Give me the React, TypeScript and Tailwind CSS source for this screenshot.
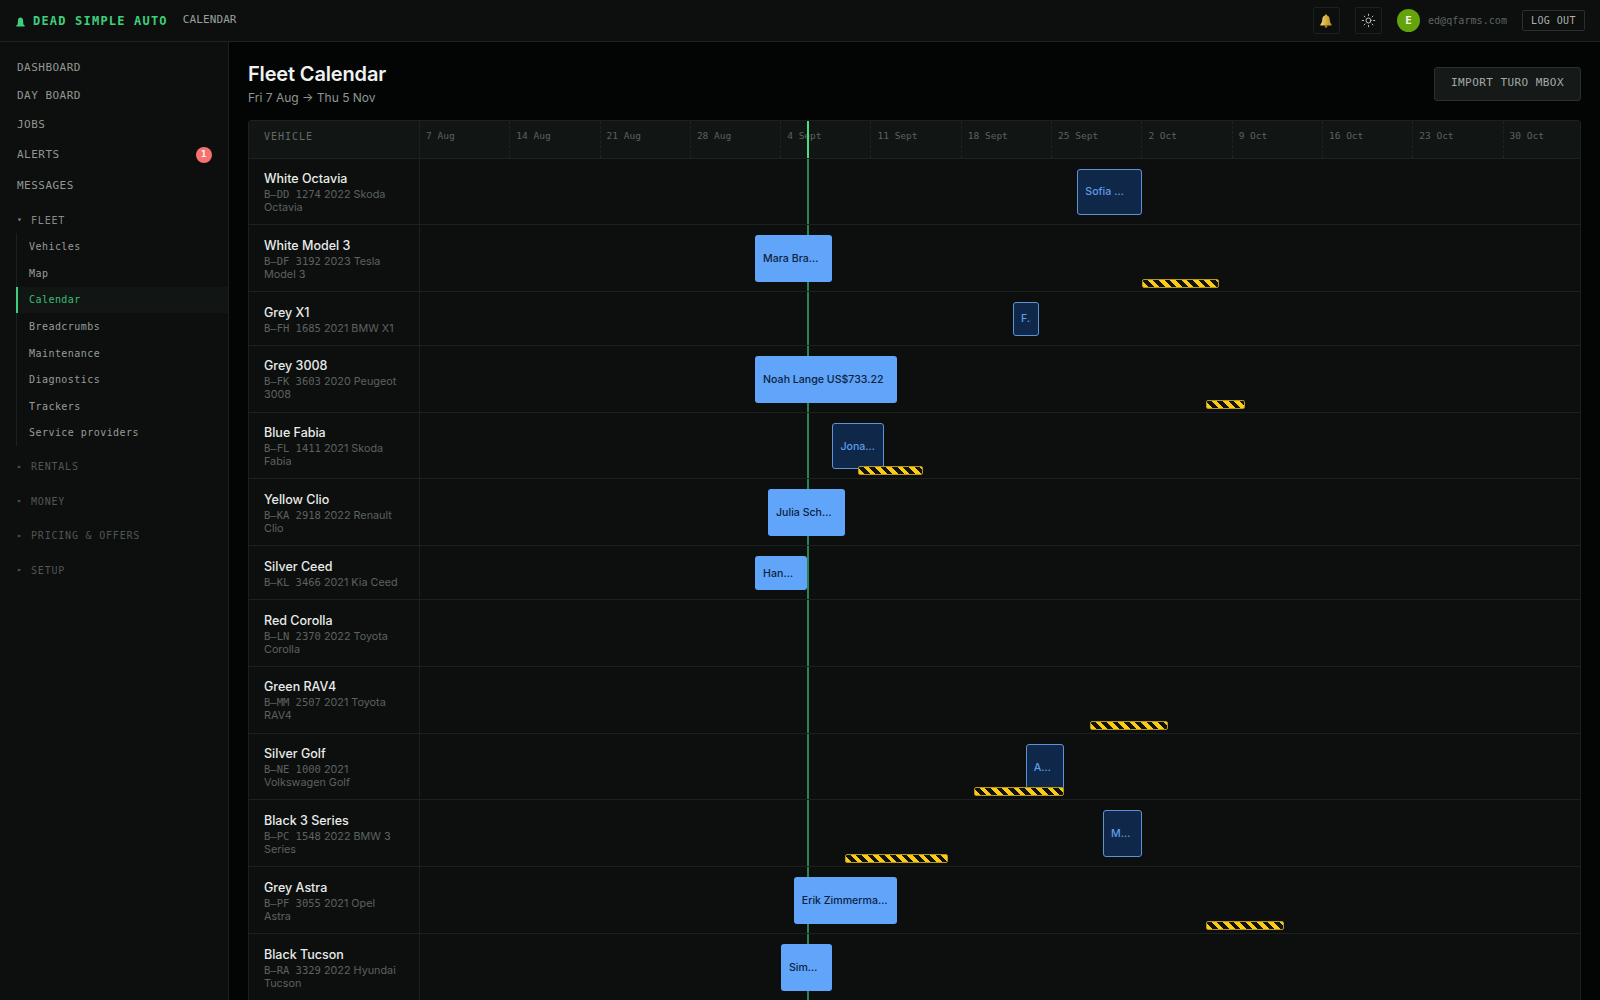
import { Sun } from 'lucide-react';

const mono = "font-['DejaVu_Sans_Mono',monospace]";
const TOTAL_DAYS = 90;
const TODAY = 30;

interface Booking {
    label: string;
    start: number;
    days: number;
    pending?: boolean;
}

interface Hold {
    start: number;
    days: number;
}

interface Vehicle {
    name: string;
    plate: string;
    desc: string;
    bookings?: Booking[];
    holds?: Hold[];
}

const vehicles: Vehicle[] = [
    { name: 'White Octavia', plate: 'B–DD 1274', desc: '2022 Skoda Octavia', bookings: [{ label: 'Sofia Wagner US$402.10', start: 51, days: 5, pending: true }] },
    { name: 'White Model 3', plate: 'B–DF 3192', desc: '2023 Tesla Model 3', bookings: [{ label: 'Mara Braun US$518.40', start: 26, days: 6 }], holds: [{ start: 56, days: 6 }] },
    { name: 'Grey X1', plate: 'B–FH 1685', desc: '2021 BMW X1', bookings: [{ label: 'Felix Wolf US$140.00', start: 46, days: 2, pending: true }] },
    { name: 'Grey 3008', plate: 'B–FK 3603', desc: '2020 Peugeot 3008', bookings: [{ label: 'Noah Lange US$733.22', start: 26, days: 11 }], holds: [{ start: 61, days: 3 }] },
    { name: 'Blue Fabia', plate: 'B–FL 1411', desc: '2021 Skoda Fabia', bookings: [{ label: 'Jonas Meyer US$266.00', start: 32, days: 4, pending: true }], holds: [{ start: 34, days: 5 }] },
    { name: 'Yellow Clio', plate: 'B–KA 2918', desc: '2022 Renault Clio', bookings: [{ label: 'Julia Schmidt US$310.75', start: 27, days: 6 }] },
    { name: 'Silver Ceed', plate: 'B–KL 3466', desc: '2021 Kia Ceed', bookings: [{ label: 'Hannah Vogel US$208.00', start: 26, days: 4 }] },
    { name: 'Red Corolla', plate: 'B–LN 2370', desc: '2022 Toyota Corolla' },
    { name: 'Green RAV4', plate: 'B–MM 2507', desc: '2021 Toyota RAV4', holds: [{ start: 52, days: 6 }] },
    { name: 'Silver Golf', plate: 'B–NE 1000', desc: '2021 Volkswagen Golf', bookings: [{ label: 'Anna Fischer US$190.00', start: 47, days: 3, pending: true }], holds: [{ start: 43, days: 7 }] },
    { name: 'Black 3 Series', plate: 'B–PC 1548', desc: '2022 BMW 3 Series', bookings: [{ label: 'Max Becker US$224.50', start: 53, days: 3, pending: true }], holds: [{ start: 33, days: 8 }] },
    { name: 'Grey Astra', plate: 'B–PF 3055', desc: '2021 Opel Astra', bookings: [{ label: 'Erik Zimmermann US$388.00', start: 29, days: 8 }], holds: [{ start: 61, days: 6 }] },
    { name: 'Black Tucson', plate: 'B–RA 3329', desc: '2022 Hyundai Tucson', bookings: [{ label: 'Simmons Koch US$276.00', start: 28, days: 4 }] },
];

const weeks = ['7 Aug', '14 Aug', '21 Aug', '28 Aug', '4 Sept', '11 Sept', '18 Sept', '25 Sept', '2 Oct', '9 Oct', '16 Oct', '23 Oct', '30 Oct'];
const topLinks = ['DASHBOARD', 'DAY BOARD', 'JOBS'];
const fleetLinks = ['Vehicles', 'Map', 'Calendar', 'Breadcrumbs', 'Maintenance', 'Diagnostics', 'Trackers', 'Service providers'];
const closedGroups = ['RENTALS', 'MONEY', 'PRICING & OFFERS', 'SETUP'];

const pct = (day: number) => `${(day / TOTAL_DAYS) * 100}%`;

function TopBar() {
    return (
        <header className="flex h-[42px] shrink-0 items-center border-b border-[#1f2422] bg-[#0c0f0e] pr-[15px] pl-[16px]">
            <svg width="9" height="10" viewBox="0 0 9 10" className="mt-[2px] mr-[8px] text-[#3fcf7c]" fill="currentColor">
                <path d="M4.5 0.5C6 0.5 6.9 1.6 7 3L7.4 7.5L8.6 8.2V9.5H0.4V8.2L1.6 7.5L2 3C2.1 1.6 3 0.5 4.5 0.5Z" />
            </svg>
            <span className={`${mono} text-[12px] font-bold tracking-[1.2px] text-[#3fcf7c]`}>DEAD SIMPLE AUTO</span>
            <span className={`${mono} ml-[15px] text-[11px] tracking-[0.1px] text-[#99a09c]`}>CALENDAR</span>
            <div className="ml-auto flex items-center">
                <button className="flex h-[27px] w-[27px] items-center justify-center rounded-[2px] border border-[#1c211f]">
                    <svg width="14" height="14" viewBox="0 0 14 14">
                        <defs>
                            <linearGradient id="bell" x1="0" y1="0" x2="1" y2="0">
                                <stop offset="0" stopColor="#f5d46a" />
                                <stop offset="1" stopColor="#b98a1e" />
                            </linearGradient>
                        </defs>
                        <path fill="url(#bell)" d="M7 0.6C7.7 0.6 8 1 8 1.5C9.9 2 10.6 3.5 10.7 5.3C10.8 7.6 11.3 9.2 12.6 10.4V11.4H1.4V10.4C2.7 9.2 3.2 7.6 3.3 5.3C3.4 3.5 4.1 2 6 1.5C6 1 6.3 0.6 7 0.6Z" />
                        <circle cx="7" cy="12.4" r="1.3" fill="#a97a18" />
                    </svg>
                </button>
                <button className="ml-[15px] flex h-[27px] w-[27px] items-center justify-center rounded-[2px] border border-[#1c211f] text-[#c4c9c6]">
                    <Sun size={15} strokeWidth={1.5} />
                </button>
                <div className="ml-[15px] flex h-[23px] w-[23px] items-center justify-center rounded-full bg-[#65a30d] text-[10px] font-bold text-[#f2f7ea]">E</div>
                <span className={`${mono} ml-[8px] text-[10px] tracking-[0.06px] text-[#5f6562]`}>ed@qfarms.com</span>
                <button className={`${mono} ml-[15px] flex h-[21px] w-[63px] items-center justify-center rounded-[2px] border border-[#2a302d] text-[10px] tracking-[0.4px] text-[#aab0ac]`}>LOG OUT</button>
            </div>
        </header>
    );
}

function Sidebar() {
    return (
        <aside className={`${mono} w-[229px] shrink-0 border-r border-[#1c211f] bg-[#0c0f0e] pt-[11.6px]`}>
            <nav>
                {topLinks.map((link) => (
                    <div key={link} className="flex h-[28.6px] items-center pl-[17px] text-[11px] tracking-[0.48px] text-[#919894]">{link}</div>
                ))}
                <div className="flex h-[31.6px] items-center justify-between pr-[16px] pl-[17px] text-[11px] tracking-[0.48px] text-[#919894]">
                    ALERTS
                    <span className="flex h-[16px] w-[16px] items-center justify-center rounded-full bg-[#f87171] text-[9px] font-bold text-white">1</span>
                </div>
                <div className="flex h-[31px] items-center pl-[17px] text-[11px] tracking-[0.48px] text-[#919894]">MESSAGES</div>
            </nav>
            <div className="mt-[4.9px]">
                <div className="flex h-[26.5px] items-center pl-[17px] text-[10px] tracking-[0.8px] text-[#858c88]">
                    <span className="w-[14px] text-[8px]">▾</span>FLEET
                </div>
                <div className="ml-[16px] flex flex-col border-l border-[#1c211f]">
                    {fleetLinks.map((link) =>
                        link === 'Calendar' ? (
                            <div key={link} className="-ml-px flex h-[26.6px] items-center border-l-2 border-[#3fcf7c] bg-[#111614] pl-[11px] text-[10px] tracking-[0.45px] text-[#3dbb74]">{link}</div>
                        ) : (
                            <div key={link} className="flex h-[26.6px] items-center pl-[12px] text-[10px] tracking-[0.45px] text-[#969c98]">{link}</div>
                        ),
                    )}
                </div>
            </div>
            <div className="mt-[3.6px]">
                {closedGroups.map((group) => (
                    <div key={group} className="flex h-[34.4px] items-center pl-[17px] text-[10px] tracking-[0.8px] text-[#505653]">
                        <span className="w-[14px] text-[8px]">▸</span>{group}
                    </div>
                ))}
            </div>
        </aside>
    );
}

function BookingBar({ booking }: { booking: Booking }) {
    return (
        <div
            className={
                booking.pending
                    ? 'absolute top-[10px] bottom-[9.2px] z-10 flex items-center rounded-[3px] border border-[#5f93d6] bg-[#0f2749] px-[7px] pt-px text-[10.6px] font-medium text-[#5f9ce8]'
                    : 'absolute top-[10px] bottom-[9.2px] z-10 flex items-center rounded-[3px] bg-[#60a5fa] px-[8px] pt-px text-[10.6px] font-medium text-[#0d2240]'
            }
            style={{ left: pct(booking.start), width: pct(booking.days) }}
        >
            <span className="truncate">{booking.label}</span>
        </div>
    );
}

function VehicleRow({ vehicle }: { vehicle: Vehicle }) {
    return (
        <div className="flex border-b border-[#1c211f]">
            <div className="w-[171px] shrink-0 border-r border-[#1c211f] pt-[12.5px] pr-[20px] pb-[10.3px] pl-[15px]">
                <div className="text-[12.5px] leading-[16px] font-medium text-[#e8ebe9]">{vehicle.name}</div>
                <div className="mt-[1px] text-[10.8px] leading-[13px] text-[#5c625f]">
                    <span className={`${mono} text-[10.5px]`}>{vehicle.plate}</span> {vehicle.desc}
                </div>
            </div>
            <div className="relative flex-1">
                <div className="absolute top-0 bottom-0 w-[2px] bg-[#2a8554]" style={{ left: pct(TODAY) }} />
                {vehicle.bookings?.map((booking) => (
                    <BookingBar key={booking.label} booking={booking} />
                ))}
                {vehicle.holds?.map((hold) => (
                    <div
                        key={hold.start}
                        className="absolute bottom-[3px] z-20 h-[9px] rounded-[2px] border border-[#b8971c] bg-[repeating-linear-gradient(45deg,#facc15_0px,#facc15_4px,#111111_4px,#111111_8px)]"
                        style={{ left: pct(hold.start), width: pct(hold.days) }}
                    />
                ))}
            </div>
        </div>
    );
}

function FleetTable() {
    return (
        <div className="rounded-t-[3px] border border-[#1c211f] bg-[#0c0f0e]">
            <div className={`${mono} flex h-[38px] border-b border-[#1c211f] bg-[#111614]`}>
                <div className="w-[171px] shrink-0 border-r border-[#1c211f] pt-[8px] pl-[15px] text-[10px] tracking-[1px] text-[#646a67]">VEHICLE</div>
                <div className="relative flex flex-1 overflow-hidden">
                    {weeks.map((week) => (
                        <div key={week} className="w-[90.3px] shrink-0 border-r border-dashed border-[#1f2422] pt-[8px] pl-[6px] text-[9.5px] text-[#5c625f]">{week}</div>
                    ))}
                    <div className="absolute top-0 bottom-0 w-[2px] bg-[#4ade80]" style={{ left: pct(TODAY) }} />
                </div>
            </div>
            {vehicles.map((vehicle) => (
                <VehicleRow key={vehicle.plate} vehicle={vehicle} />
            ))}
        </div>
    );
}

export default function App() {
    return (
        <div className="flex h-screen flex-col overflow-hidden bg-[#030504] font-['Inter',sans-serif]">
            <TopBar />
            <div className="flex min-h-0 flex-1">
                <Sidebar />
                <main className="min-w-0 flex-1 overflow-hidden px-[19px] pt-[19px]">
                    <div className="mb-[13.5px] flex items-center justify-between">
                        <div>
                            <h1 className="text-[20px] leading-[27px] font-semibold tracking-[-0.15px] text-[#f0f2f1]">Fleet Calendar</h1>
                            <p className="pt-px text-[12px] leading-[17px] text-[#8f9692]">Fri 7 Aug → Thu 5 Nov</p>
                        </div>
                        <button className={`${mono} h-[34px] w-[147px] rounded-[3px] border border-[#2a302d] bg-[#151a18] text-[11px] tracking-[0.44px] text-[#a3aaa6]`}>IMPORT TURO MBOX</button>
                    </div>
                    <FleetTable />
                </main>
            </div>
        </div>
    );
}
